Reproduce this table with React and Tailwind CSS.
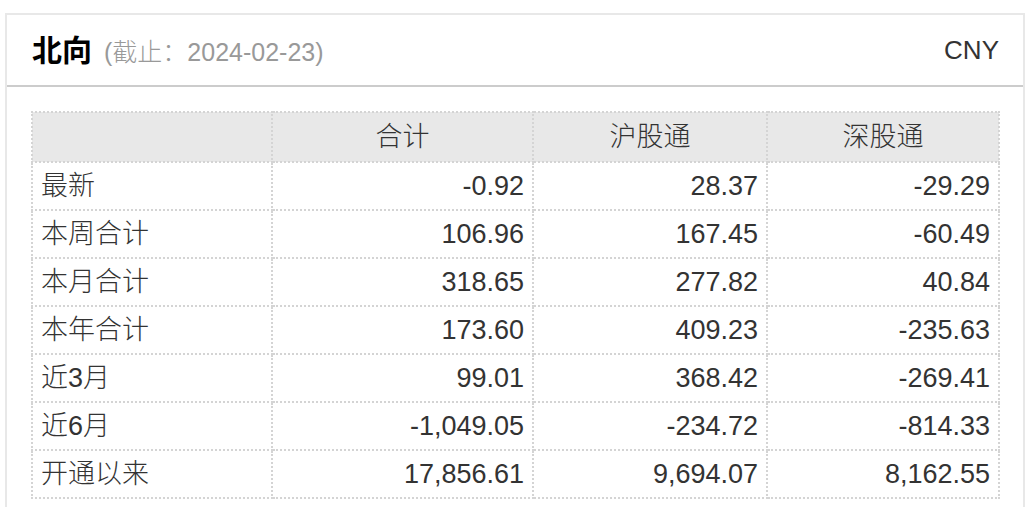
const rows = [
  ["最新", "-0.92", "28.37", "-29.29"],
  ["本周合计", "106.96", "167.45", "-60.49"],
  ["本月合计", "318.65", "277.82", "40.84"],
  ["本年合计", "173.60", "409.23", "-235.63"],
  ["近3月", "99.01", "368.42", "-269.41"],
  ["近6月", "-1,049.05", "-234.72", "-814.33"],
  ["开通以来", "17,856.61", "9,694.07", "8,162.55"],
];

const cell = "border-2 border-dotted border-[#d4d4d4]";

export default function App() {
  return (
    <div
      className="bg-white w-[1031px] h-[507px] overflow-hidden pt-[13px] pl-[5px]"
      style={{ fontFamily: '"Liberation Sans", Arial, "Noto Sans CJK SC", sans-serif' }}
    >
      <div className="w-[1020px] h-[520px] border-2 border-[#e8e8e8]">
        <div className="h-[72px] flex items-center justify-between pl-[25px] pr-[24px] border-b-2 border-[#cccccc]">
          <div className="flex items-baseline">
            <span className="text-[30px] font-bold text-black">北向</span>
            <span className="text-[25px] text-[#999999] ml-[12px] font-light">(截止：2024-02-23)</span>
          </div>
          <span className="text-[26px] text-[#333333] font-light">CNY</span>
        </div>
        <div className="pt-[24px] px-[24px]">
          <table className="table-fixed border-collapse w-[967px] text-[27px] text-[#333333] font-light">
            <colgroup>
              <col className="w-[240px]" />
              <col className="w-[261px]" />
              <col className="w-[234px]" />
              <col className="w-[232px]" />
            </colgroup>
            <thead>
              <tr className="h-[50px] bg-[#e8e8e8]">
                <th className={cell}></th>
                <th className={`${cell} font-light text-center`}>合计</th>
                <th className={`${cell} font-light text-center`}>沪股通</th>
                <th className={`${cell} font-light text-center`}>深股通</th>
              </tr>
            </thead>
            <tbody>
              {rows.map((r) => (
                <tr key={r[0]} className="h-[48px]">
                  <td className={`${cell} pl-[8px] text-left`}>{r[0]}</td>
                  <td className={`${cell} pr-[8px] text-right`}>{r[1]}</td>
                  <td className={`${cell} pr-[8px] text-right`}>{r[2]}</td>
                  <td className={`${cell} pr-[8px] text-right`}>{r[3]}</td>
                </tr>
              ))}
            </tbody>
          </table>
        </div>
      </div>
    </div>
  );
}
